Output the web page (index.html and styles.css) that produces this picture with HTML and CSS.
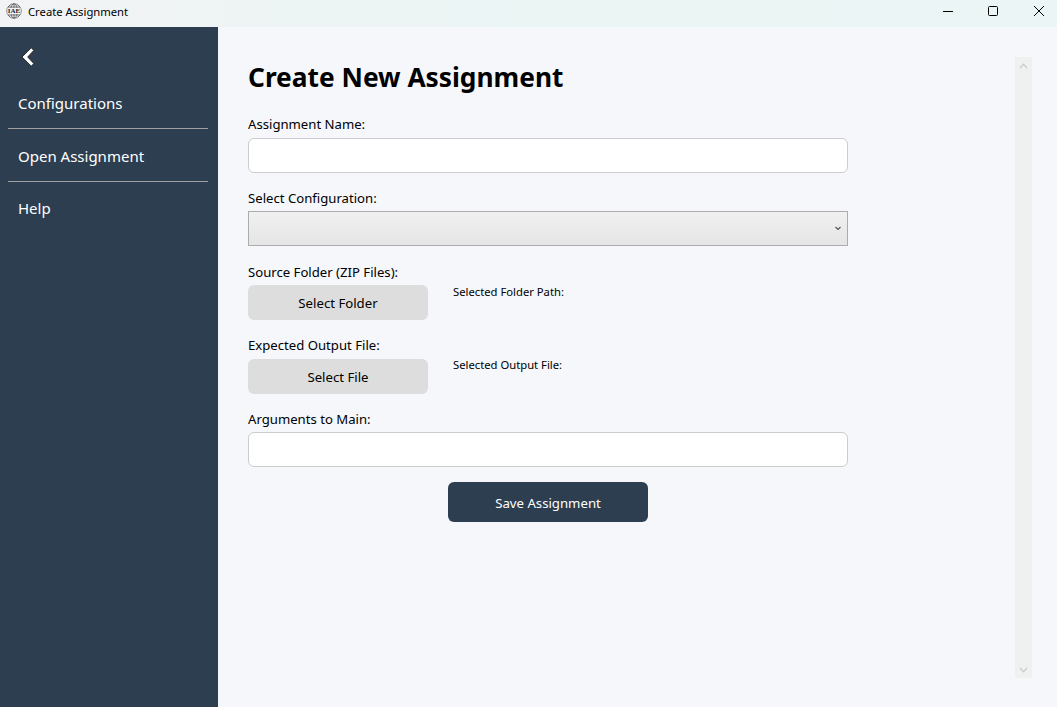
FILE: index.html
```
<!DOCTYPE html>
<html lang="en">
<head>
<meta charset="utf-8">
<title>Create Assignment</title>
<link rel="stylesheet" href="styles.css">
</head>
<body>
<div class="window">
  <header class="titlebar">
    <svg class="app-icon" width="16" height="16" viewBox="0 0 16 16">
      <g fill="none" stroke="#666" stroke-width="0.9">
        <circle cx="8" cy="8" r="7.2"/>
        <ellipse cx="8" cy="8" rx="3.4" ry="7.2"/>
        <path d="M8 .8v14.400M2 4h12M2 12h12"/>
      </g>
      <rect x="1.500" y="5" width="13" height="6" fill="#eef2f3"/>
      <text class="app-icon-text" x="8" y="10.400" text-anchor="middle">IAE</text>
    </svg>
    <span class="caption">Create Assignment</span>
    <div class="controls">
      <svg width="12" height="12" viewBox="0 0 12 12"><path d="M1 6.500h10" stroke="#000"/></svg>
      <svg width="12" height="12" viewBox="0 0 12 12"><rect x="1.500" y="1.500" width="9" height="9" rx="1" fill="none" stroke="#000"/></svg>
      <svg width="12" height="12" viewBox="0 0 12 12"><path d="M1 1l10 10M11 1L1 11" stroke="#000"/></svg>
    </div>
  </header>
  <div class="body">
    <nav class="sidebar">
      <svg class="back" width="14" height="20" viewBox="0 0 14 20"><path d="M10.300.8 1 10l9.300 9.200 2.500-2.600L6.700 10l6.100-6.600z" fill="#fff" stroke="#111" stroke-width="0.8"/></svg>
      <a class="item configurations"><span>Configurations</span></a>
      <a class="item open"><span>Open Assignment</span></a>
      <a class="item help"><span>Help</span></a>
    </nav>
    <main class="content">
      <form class="form">
        <h1 class="title">Create New Assignment</h1>
        <label class="label">Assignment Name:</label>
        <div class="input"></div>
        <label class="label">Select Configuration:</label>
        <div class="select"><svg width="6" height="5" viewBox="0 0 6 5"><path d="M.5 1 3 3.500 5.500 1" fill="none" stroke="#555" stroke-width="1.200"/></svg></div>
        <label class="label source">Source Folder (ZIP Files):</label>
        <div class="picker">
          <div class="button"><span>Select Folder</span></div>
          <span class="path">Selected Folder Path:</span>
        </div>
        <label class="label">Expected Output File:</label>
        <div class="picker">
          <div class="button file"><span>Select File</span></div>
          <span class="path output">Selected Output File:</span>
        </div>
        <label class="label">Arguments to Main:</label>
        <div class="input"></div>
        <div class="save"><span>Save Assignment</span></div>
      </form>
      <div class="scrollbar">
        <svg width="9" height="6" viewBox="0 0 9 6"><path d="M1 5l3.500-3.800L8 5" fill="none" stroke="#cdcdcd" stroke-width="1.300"/></svg>
        <svg width="9" height="6" viewBox="0 0 9 6"><path d="M1 1l3.500 3.800L8 1" fill="none" stroke="#cdcdcd" stroke-width="1.300"/></svg>
      </div>
    </main>
  </div>
</div>
</body>
</html>
```
FILE: styles.css
```
* { box-sizing: border-box; }
body {
  margin: 0;
  font-family: "Noto Sans", "Open Sans", sans-serif;
  color: #000;
  white-space: nowrap;
}
.window {
  width: 1057px;
  height: 707px;
  display: flex;
  flex-direction: column;
  overflow: hidden;
}
.titlebar {
  height: 27px;
  display: flex;
  align-items: flex-start;
  padding-left: 6px;
  background: linear-gradient(90deg, #f2f3f5 0, #eef4f4 240px, #eaf5f4 600px, #ecf5f5 100%);
}
.app-icon { margin-top: 3px; }
.app-icon-text { font: bold 7px "Liberation Serif", serif; fill: #222; }
.caption {
  margin-left: 6px;
  font-size: 11.25px;
  line-height: 23px;
}
.controls {
  margin-left: auto;
  padding: 5px 12px 0 0;
  display: grid;
  grid-template-columns: 45px 46px 12px;
}
.body { flex: 1; display: flex; }
.sidebar {
  width: 218px;
  padding: 20px 10px 0 8px;
  background: #2d3e50;
  color: #fff;
  font-size: 15px;
}
.back { display: block; margin: 0 0 11px 13px; }
.item {
  display: flex;
  align-items: center;
  height: 53px;
  padding-left: 10px;
  border-bottom: 1px solid #a0a0a0;
}
.item.configurations { height: 51px; }
.item.open { padding-top: 2px; }
.item.help { border: 0; height: 51px; }
.content {
  flex: 1;
  display: flex;
  justify-content: space-between;
  padding: 30px 25px 29px 30px;
  background: #f5f7fb;
}
.form { width: 600px; }
.title {
  margin: 0 0 17.250px;
  font-size: 26.300px;
  line-height: 40px;
}
.label {
  display: block;
  height: 23.600px;
  font-size: 13.150px;
  line-height: 21px;
}
.label.source { line-height: 22px; }
.input, .select { height: 35px; margin-bottom: 15px; }
.input {
  background: #fff;
  border: 1px solid #ccc;
  border-radius: 6px;
}
.select {
  display: flex;
  align-items: center;
  justify-content: flex-end;
  padding-right: 6px;
  border: 1px solid #acacac;
  background: linear-gradient(#f0f0f0, #e5e5e5);
}
.picker {
  display: flex;
  align-items: flex-start;
  gap: 25px;
  height: 35px;
  margin-bottom: 15px;
}
.button {
  width: 180px;
  height: 35px;
  border-radius: 6px;
  background: #ddd;
  display: flex;
  align-items: center;
  justify-content: center;
  font-size: 13.200px;
}
.button.file { padding-top: 1px; }
.path { font-size: 11.250px; line-height: 13px; }
.path.output { line-height: 12px; }
.save {
  width: 200px;
  height: 40px;
  margin: 0 auto;
  padding-top: 1px;
  display: flex;
  align-items: center;
  justify-content: center;
  border-radius: 6px;
  background: #2d3e50;
  color: #fff;
  font-size: 13.200px;
}
.scrollbar {
  width: 17px;
  height: 621px;
  padding: 6px 0 5px;
  background: #f0f0f0;
  display: flex;
  flex-direction: column;
  align-items: center;
  justify-content: space-between;
}
```
